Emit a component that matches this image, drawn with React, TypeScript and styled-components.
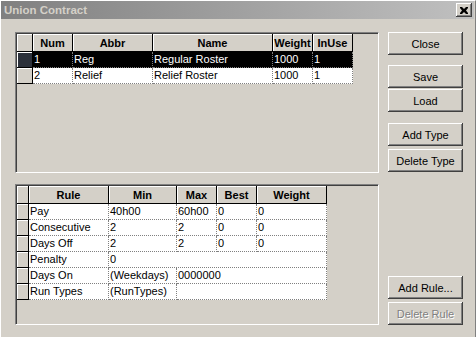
import React from "react";
import styled, { createGlobalStyle } from "styled-components";

const Global = createGlobalStyle`
  html, body { margin: 0; padding: 0; background: #d4d0c8; }
  body { font-family: "Liberation Sans", Arial, sans-serif; font-size: 11px; }
`;

const Window = styled.div`
  box-sizing: border-box;
  width: 476px;
  height: 337px;
  background: #d4d0c8;
  border-top: 1px solid #ffffff;
  border-left: 1px solid #ffffff;
  border-right: 1px solid #808080;
  overflow: hidden;
  display: flex;
  flex-direction: column;
`;

const TitleBar = styled.div`
  height: 18px;
  margin-right: 1px;
  background: linear-gradient(to right, #808080, #c0c0c0);
  display: flex;
  align-items: center;
  justify-content: space-between;
  padding: 0 2px 0 3px;
`;

const Title = styled.span`
  color: #d4d0c8;
  font-family: "Liberation Sans", Arial, sans-serif;
  font-weight: bold;
  font-size: 11.5px;
`;

const CloseBox = styled.div`
  box-sizing: border-box;
  width: 16px;
  height: 14px;
  background: #d4d0c8;
  box-shadow: inset -1px -1px #404040, inset 1px 1px #ffffff, inset -2px -2px #808080;
  display: flex;
  align-items: center;
  justify-content: center;
`;

const Body = styled.div`
  display: grid;
  grid-template-columns: 364px 75px;
  column-gap: 9px;
  padding: 13px 0 0 14px;
`;

const LeftCol = styled.div`
  display: flex;
  flex-direction: column;
  gap: 11px;
`;

const RightCol = styled.div`
  display: flex;
  flex-direction: column;
`;

const Panel = styled.div`
  box-sizing: border-box;
  width: 364px;
  height: 141px;
  border-top: 1px solid #808080;
  border-left: 1px solid #808080;
  border-right: 1px solid #ffffff;
  border-bottom: 1px solid #ffffff;
  box-shadow: inset 1px 1px #404040;
  padding: 1px 0 0 1px;
  overflow: hidden;
`;

const Row = styled.div<{ $cols: string; $h: number }>`
  display: grid;
  grid-template-columns: ${(p) => p.$cols};
  height: ${(p) => p.$h}px;
`;

const HeadCell = styled.div`
  box-sizing: border-box;
  background: #d4d0c8;
  border-right: 1px solid #000;
  border-bottom: 1px solid #000;
  box-shadow: inset 1px 1px #ffffff;
  font-weight: bold;
  font-size: 11px;
  color: #000;
  display: flex;
  align-items: center;
  justify-content: center;
  overflow: hidden;
  white-space: nowrap;
  padding-top: 1px;
`;

const Indicator = styled.div<{ $sel?: boolean }>`
  box-sizing: border-box;
  background: ${(p) => (p.$sel ? "#2c313b" : "#d4d0c8")};
  border-right: 1px solid #000;
  border-bottom: 1px solid #000;
  box-shadow: inset 1px 1px #ffffff;
`;

const Cell = styled.div<{ $sel?: boolean; $span?: number }>`
  box-sizing: border-box;
  grid-column: span ${(p) => p.$span ?? 1};
  background: ${(p) => (p.$sel ? "#000" : "#fff")};
  color: ${(p) => (p.$sel ? "#fff" : "#000")};
  border-right: 1px dotted #808080;
  border-bottom: 1px dotted #808080;
  font-size: 11px;
  line-height: 15px;
  padding-left: 1px;
  white-space: nowrap;
  overflow: hidden;
`;

const Button = styled.button<{ $mt: number; $disabled?: boolean }>`
  box-sizing: border-box;
  width: 75px;
  height: 23px;
  margin: ${(p) => p.$mt}px 0 0 0;
  padding: 0;
  background: #d4d0c8;
  border: none;
  box-shadow: inset -1px -1px #404040, inset 1px 1px #ffffff, inset -2px -2px #808080;
  font-family: "Liberation Sans", Arial, sans-serif;
  font-size: 11px;
  color: ${(p) => (p.$disabled ? "#808080" : "#000")};
  text-shadow: ${(p) => (p.$disabled ? "1px 1px #ffffff" : "none")};
`;

const topCols = "16px 40px 80px 120px 40px 40px";
const botCols = "12px 80px 68px 40px 40px 70px";

const types = [
  ["1", "Reg", "Regular Roster", "1000", "1"],
  ["2", "Relief", "Relief Roster", "1000", "1"],
];

type RuleRow = { cells: string[]; spans?: number[] };
const rules: RuleRow[] = [
  { cells: ["Pay", "40h00", "60h00", "0", "0"] },
  { cells: ["Consecutive", "2", "2", "0", "0"] },
  { cells: ["Days Off", "2", "2", "0", "0"] },
  { cells: ["Penalty", "0"], spans: [1, 4] },
  { cells: ["Days On", "(Weekdays)", "0000000"], spans: [1, 1, 3] },
  { cells: ["Run Types", "(RunTypes)", ""], spans: [1, 1, 3] },
];

export default function App() {
  return (
    <>
      <Global />
      <Window>
        <TitleBar>
          <Title>Union Contract</Title>
          <CloseBox>
            <svg width="8" height="7" viewBox="0 0 8 7">
              <path d="M0 0h2l2 2 2-2h2v1L6 3.5 8 6v1H6L4 5 2 7H0V6l2-2.5L0 1z" fill="#000" />
            </svg>
          </CloseBox>
        </TitleBar>
        <Body>
          <LeftCol>
            <Panel>
              <Row $cols={topCols} $h={18}>
                <HeadCell />
                <HeadCell>Num</HeadCell>
                <HeadCell>Abbr</HeadCell>
                <HeadCell>Name</HeadCell>
                <HeadCell>Weight</HeadCell>
                <HeadCell>InUse</HeadCell>
              </Row>
              {types.map((r, i) => (
                <Row key={i} $cols={topCols} $h={16}>
                  <Indicator $sel={i === 0} />
                  {r.map((c, j) => (
                    <Cell key={j} $sel={i === 0}>
                      {c}
                    </Cell>
                  ))}
                </Row>
              ))}
            </Panel>
            <Panel>
              <Row $cols={botCols} $h={18}>
                <HeadCell />
                <HeadCell>Rule</HeadCell>
                <HeadCell>Min</HeadCell>
                <HeadCell>Max</HeadCell>
                <HeadCell>Best</HeadCell>
                <HeadCell>Weight</HeadCell>
              </Row>
              {rules.map((r, i) => (
                <Row key={i} $cols={botCols} $h={16}>
                  <Indicator />
                  {r.cells.map((c, j) => (
                    <Cell key={j} $span={r.spans ? r.spans[j] : 1}>
                      {c}
                    </Cell>
                  ))}
                </Row>
              ))}
            </Panel>
          </LeftCol>
          <RightCol>
            <Button $mt={0}>Close</Button>
            <Button $mt={10}>Save</Button>
            <Button $mt={1}>Load</Button>
            <Button $mt={11}>Add Type</Button>
            <Button $mt={3}>Delete Type</Button>
            <Button $mt={104}>Add Rule...</Button>
            <Button $mt={3} $disabled>
              Delete Rule
            </Button>
          </RightCol>
        </Body>
      </Window>
    </>
  );
}
